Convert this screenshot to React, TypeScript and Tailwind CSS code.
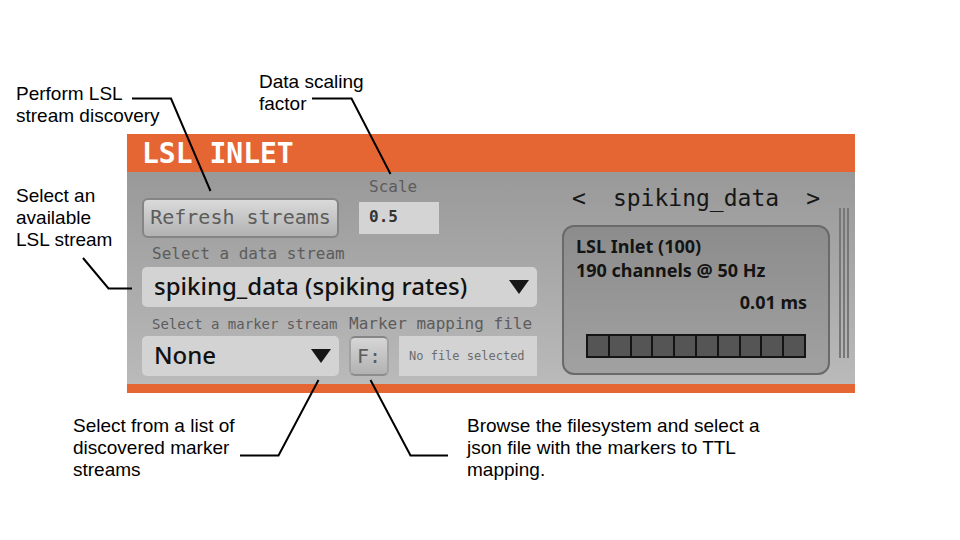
import type { ReactNode } from "react";

const mono = "font-['DejaVu_Sans_Mono','Liberation_Mono',monospace]";
const sans = "font-['Noto_Sans','Open_Sans',sans-serif]";

function Caption({ className = "", children }: { className?: string; children: ReactNode }) {
  return <p className={`text-[19px] leading-[22px] text-black ${className}`}>{children}</p>;
}

function DropDown({ id, option }: { id: string; option: string }) {
  return (
    <div className="relative">
      <select
        id={id}
        className={`block h-10 w-full appearance-none rounded-[5px] bg-[#d3d3d3] pr-10 pb-[2px] pl-3 text-[24px] leading-[38px] font-medium text-[#111] ${sans}`}
      >
        <option>{option}</option>
      </select>
      <svg className="pointer-events-none absolute top-[13px] right-2 h-[14px] w-5" viewBox="0 0 20 14" aria-hidden="true">
        <path d="M0 0H20L10 14Z" fill="#161616" />
      </svg>
    </div>
  );
}

function Controls() {
  return (
    <div className={`flex w-[395px] shrink-0 flex-col text-[#5c5c5c] ${mono}`}>
      <div className="flex h-[66px] items-end gap-5">
        <button className="h-10 w-[197px] rounded-md border-2 border-[#858585] bg-linear-to-b from-[#dadada] to-[#b2b2b2] pb-[2px] text-[20px] whitespace-nowrap">
          Refresh streams
        </button>
        <div className="flex flex-col pb-1">
          <label htmlFor="scale" className="h-6 pl-[10px] text-[16px] leading-[18px]">
            Scale
          </label>
          <input
            id="scale"
            defaultValue="0.5"
            className="h-8 w-20 bg-[#d4d4d4] px-[10px] pb-1 text-[16px] font-bold text-[#333]"
          />
        </div>
      </div>
      <label htmlFor="data-stream" className="h-[29px] pl-[10px] text-[16px] leading-[32px]">
        Select a data stream
      </label>
      <DropDown id="data-stream" option="spiking_data (spiking rates)" />
      <div className="flex gap-[10px]">
        <div className="flex w-[197px] flex-col">
          <label htmlFor="marker-stream" className="h-[29px] pl-[10px] text-[14px] leading-[34px] whitespace-nowrap">
            Select a marker stream
          </label>
          <DropDown id="marker-stream" option="None" />
        </div>
        <div className="flex flex-1 flex-col">
          <label htmlFor="mapping-file" className="h-[29px] text-[16px] leading-[34px] whitespace-nowrap">
            Marker mapping file
          </label>
          <div className="flex gap-[10px]">
            <button className="h-10 w-10 rounded-md border-2 border-x-[#a2a2a2] border-t-[#858585] border-b-[#8d8d8d] bg-linear-to-b from-[#d6d6d6] to-[#b2b2b2] text-[20px]">
              F:
            </button>
            <input
              id="mapping-file"
              readOnly
              value="No file selected"
              className="h-10 w-[138px] bg-[#d3d3d3] pl-[10px] text-[12px] text-[#6c6c6c]"
            />
          </div>
        </div>
      </div>
    </div>
  );
}

function StreamInfo() {
  return (
    <div className="ml-auto flex w-[268px] shrink-0 flex-col">
      <div className={`flex h-[53px] items-center justify-between px-[10px] text-[23px] text-[#161616] ${mono}`}>
        <button aria-label="Previous stream">&lt;</button>
        <span>spiking_data</span>
        <button aria-label="Next stream">&gt;</button>
      </div>
      <div
        className={`flex h-[150px] flex-col rounded-xl border-2 border-[#6a6a6a] bg-linear-to-b from-[#8c8c8c] to-[#a1a1a1] px-3 pt-[7px] text-[18px] leading-6 font-bold text-[#141414] ${sans}`}
      >
        <p>LSL Inlet (100)</p>
        <p>190 channels @ 50 Hz</p>
        <p className="mt-2 pr-[9px] text-right">0.01 ms</p>
        <div className="mx-[10px] mt-5 flex h-6 gap-[2px] border-2 border-[#141414] bg-[#141414]">
          {Array.from({ length: 10 }, (_, i) => (
            <span key={i} className="flex-1 bg-[#555]" />
          ))}
        </div>
      </div>
    </div>
  );
}

function Leaders() {
  return (
    <svg
      className="pointer-events-none absolute top-0 left-0 h-[540px] w-[960px]"
      viewBox="0 0 960 540"
      fill="none"
      stroke="#000"
      strokeWidth="2"
      aria-hidden="true"
    >
      <path d="M132 98.500H171L210.500 191" />
      <path d="M312 98.500H351.500L390.500 174" />
      <path d="M83 258L108.500 288.500H132" />
      <path d="M240 455.500H278.500L318.500 380" />
      <path d="M448 455.500H410.500L370.500 380" />
    </svg>
  );
}

export default function App() {
  return (
    <main className="relative min-h-screen bg-white font-['Liberation_Sans',Arial,sans-serif]">
      <div className="flex h-[134px] pt-[71px] pl-4">
        <Caption className="w-[243px] pt-3">
          Perform LSL
          <br />
          stream discovery
        </Caption>
        <Caption>
          Data scaling
          <br />
          factor
        </Caption>
      </div>
      <div className="flex pr-[105px]">
        <Caption className="w-[127px] shrink-0 pt-[51px] pl-4">
          Select an
          <br />
          available
          <br />
          LSL stream
        </Caption>
        <section className="min-w-0 flex-1 bg-[#e56633]">
          <h1 className={`h-[38px] pl-[15px] text-[28px] leading-[40px] font-bold text-white ${mono}`}>LSL INLET</h1>
          <div className="flex h-[212px] bg-linear-to-b from-[#999] to-[#bababa] pr-[6px] pl-[15px]">
            <Controls />
            <StreamInfo />
            <div className="mt-9 ml-[9px] flex h-[150px] gap-[2px]">
              <span className="w-[2px] bg-[#777]" />
              <span className="w-[2px] bg-[#777]" />
              <span className="w-[2px] bg-[#777]" />
            </div>
          </div>
          <div className="h-[9px]" />
        </section>
      </div>
      <div className="flex pt-[22px] pl-[73px]">
        <Caption className="w-[394px]">
          Select from a list of
          <br />
          discovered marker
          <br />
          streams
        </Caption>
        <Caption>
          Browse the filesystem and select a
          <br />
          json file with the markers to TTL
          <br />
          mapping.
        </Caption>
      </div>
      <Leaders />
    </main>
  );
}
